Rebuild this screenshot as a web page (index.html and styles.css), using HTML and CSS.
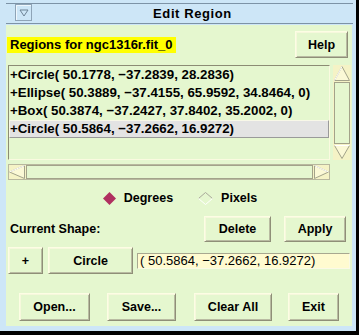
FILE: index.html
```html
<!DOCTYPE html>
<html>
<head>
<meta charset="utf-8">
<link rel="stylesheet" href="styles.css">
</head>
<body>
<div class="window">
  <div class="titlebar">
    <div class="menubtn">
      <svg width="10" height="8" viewBox="0 0 10 8"><polygon points="1,1 9,1 5,7" fill="none" stroke="#6d8396" stroke-width="1"/></svg>
    </div>
    <div class="title">Edit Region</div>
  </div>
  <div class="content">
    <div class="row head">
      <div class="hilite">Regions for ngc1316r.fit_0</div>
      <div class="btn help">Help</div>
    </div>
    <div class="listwrap">
      <div class="listbox">
        <div class="item">+Circle( 50.1778, −37.2839, 28.2836)</div>
        <div class="item">+Ellipse( 50.3889, −37.4155, 65.9592, 34.8464, 0)</div>
        <div class="item">+Box( 50.3874, −37.2427, 37.8402, 35.2002, 0)</div>
        <div class="item sel">+Circle( 50.5864, −37.2662, 16.9272)</div>
      </div>
      <div class="vscroll">
        <svg width="18" height="95" viewBox="0 0 18 95">
          <rect x="0" y="0" width="18" height="95" fill="#f5f3c6"/>
          <polygon points="9,1.5 16.5,15.5 1.5,15.5" fill="#fbf9d6" stroke="#a3a38a" stroke-width="1"/>
          <line x1="9" y1="1.5" x2="1.5" y2="15.5" stroke="#ffffff" stroke-width="1"/>
          <rect x="1.5" y="17.5" width="15" height="61" fill="#e5f7cf" stroke="#a3a38a" stroke-width="1"/>
          <polygon points="1.5,80.5 16.5,80.5 9,93.5" fill="#fbf9d6" stroke="#a3a38a" stroke-width="1"/>
          <line x1="1.5" y1="80.5" x2="16.5" y2="80.5" stroke="#ffffff" stroke-width="1"/>
        </svg>
      </div>
    </div>
    <div class="hscroll">
      <svg width="322" height="16" viewBox="0 0 322 16">
        <rect x="0" y="0" width="322" height="16" fill="#f5f3c6"/>
        <rect x="0.5" y="0.5" width="321" height="15" fill="none" stroke="#b8b89e" stroke-width="1"/>
        <polygon points="1.5,8 16.5,1.5 16.5,14.5" fill="#fbf9d6" stroke="#a3a38a" stroke-width="1"/>
        <line x1="1.5" y1="8" x2="16.5" y2="1.5" stroke="#ffffff" stroke-width="1"/>
        <rect x="18.5" y="1.5" width="286" height="13" fill="#e5f7cf" stroke="#a3a38a" stroke-width="1"/>
        <polygon points="306.5,1.5 320.5,8 306.5,14.5" fill="#fbf9d6" stroke="#a3a38a" stroke-width="1"/>
        <line x1="306.5" y1="1.5" x2="320.5" y2="8" stroke="#ffffff" stroke-width="1"/>
      </svg>
    </div>
    <div class="row radios">
      <div class="radio">
        <svg width="13" height="13" viewBox="0 0 13 13"><polygon points="6.5,0 13,6.5 6.5,13 0,6.5" fill="#b03060"/></svg>
        <span>Degrees</span>
      </div>
      <div class="radio">
        <svg width="15" height="13" viewBox="0 0 15 13">
          <polyline points="0.5,6.5 7.5,0.5 14.5,6.5" fill="none" stroke="#a8a89a" stroke-width="1"/>
          <polyline points="0.5,6.5 7.5,12.5 14.5,6.5" fill="none" stroke="#ffffff" stroke-width="1"/>
        </svg>
        <span>Pixels</span>
      </div>
    </div>
    <div class="row current">
      <div class="label">Current Shape:</div>
      <div class="btn delete">Delete</div>
      <div class="btn apply">Apply</div>
    </div>
    <div class="row shape">
      <div class="btn plus">+</div>
      <div class="btn circle">Circle</div>
      <div class="entry">( 50.5864, −37.2662, 16.9272)</div>
    </div>
    <div class="row bottom">
      <div class="btn open">Open...</div>
      <div class="btn save">Save...</div>
      <div class="btn clear">Clear All</div>
      <div class="btn exit">Exit</div>
    </div>
  </div>
</div>
</body>
</html>
```

FILE: styles.css
```css
* { box-sizing: border-box; }
html, body { margin: 0; padding: 0; }
body {
  background: #000;
  width: 359px;
  height: 335px;
  overflow: hidden;
  font-family: "Liberation Sans", Arial, sans-serif;
  font-weight: bold;
  color: #000;
}
.window {
  width: 356px;
  height: 331px;
  background: #cde6f7;
  display: flex;
  flex-direction: column;
}
.titlebar {
  margin: 3px 3px 1px 6px;
  height: 21px;
  border-top: 1px solid #7d93a6;
  border-bottom: 1px solid #7d93a6;
  display: flex;
  align-items: center;
}
.menubtn {
  margin-left: 9px;
  width: 17px;
  height: 17px;
  align-self: flex-start;
  border: 1px solid #8ea4b7;
  box-shadow: inset 1px 1px #eef7fd;
  display: flex;
  align-items: center;
  justify-content: center;
}
.menubtn svg { display: block; }
.title {
  flex: 1;
  text-align: center;
  font-size: 13px;
  letter-spacing: 0.6px;
  line-height: 19px;
}
.content {
  margin-left: 6px;
  width: 346px;
  height: 301px;
  background: #e5f7cf;
  padding: 6px 0 0 2px;
  display: flex;
  flex-direction: column;
}
.row { display: flex; align-items: center; }
.head { height: 27px; }
.hilite {
  margin-left: -1px;
  height: 16px;
  line-height: 16px;
  padding: 0 3px;
  background: #ffff00;
  font-size: 13px;
  white-space: nowrap;
}
.btn {
  display: flex;
  align-items: center;
  justify-content: center;
  background: #e5f7cf;
  border: 1px solid;
  border-color: #fdfde4 #8f8f78 #8f8f78 #fdfde4;
  box-shadow: inset 1px 1px #f6f8dc, inset -1px -1px #b9bba2;
  font-size: 12.5px;
  white-space: nowrap;
}
.help { margin-left: auto; margin-right: 4px; width: 53px; height: 27px; }
.listwrap { display: flex; margin-top: 7px; height: 95px; }
.listbox {
  width: 322px;
  height: 95px;
  border: 1px solid;
  border-color: #8c8c74 #fafae0 #fafae0 #8c8c74;
  overflow: hidden;
}
.item {
  height: 18px;
  line-height: 18px;
  padding-left: 1px;
  font-size: 13.3px;
  white-space: nowrap;
}
.item.sel {
  background: #e3e3e3;
  border: 1px solid;
  border-color: #f8f8e8 #9a9a9a #9a9a9a #f8f8e8;
  line-height: 16px;
  padding-left: 0;
}
.vscroll { margin-left: 3px; width: 18px; height: 95px; }
.vscroll svg, .hscroll svg { display: block; }
.hscroll { margin-top: 4px; width: 322px; height: 16px; }
.radios {
  height: 36px;
  justify-content: center;
  gap: 25px;
  font-size: 12.5px;
}
.radio { display: flex; align-items: center; }
.radio svg { display: block; margin-right: 8px; }
.current { height: 26px; }
.label { padding-left: 2px; font-size: 12.5px; }
.delete { margin-left: auto; width: 67px; height: 26px; }
.apply { margin-left: 13px; margin-right: 6px; width: 62px; height: 26px; }
.shape { margin-top: 5px; height: 27px; }
.plus { width: 35px; height: 27px; }
.circle { margin-left: 5px; width: 85px; height: 27px; }
.entry {
  margin-left: 4px;
  width: 213px;
  height: 16px;
  line-height: 14px;
  padding-left: 2px;
  background: #fffbd0;
  border: 1px solid;
  border-color: #a8a890 #fafae6 #fafae6 #a8a890;
  font-weight: normal;
  font-size: 13px;
  white-space: nowrap;
}
.bottom { margin-top: 19px; height: 28px; }
.bottom .btn { height: 28px; }
.open { margin-left: 11px; width: 71px; }
.save { margin-left: 17px; width: 69px; }
.clear { margin-left: 18px; width: 78px; }
.exit { margin-left: 16px; width: 51px; }
```
